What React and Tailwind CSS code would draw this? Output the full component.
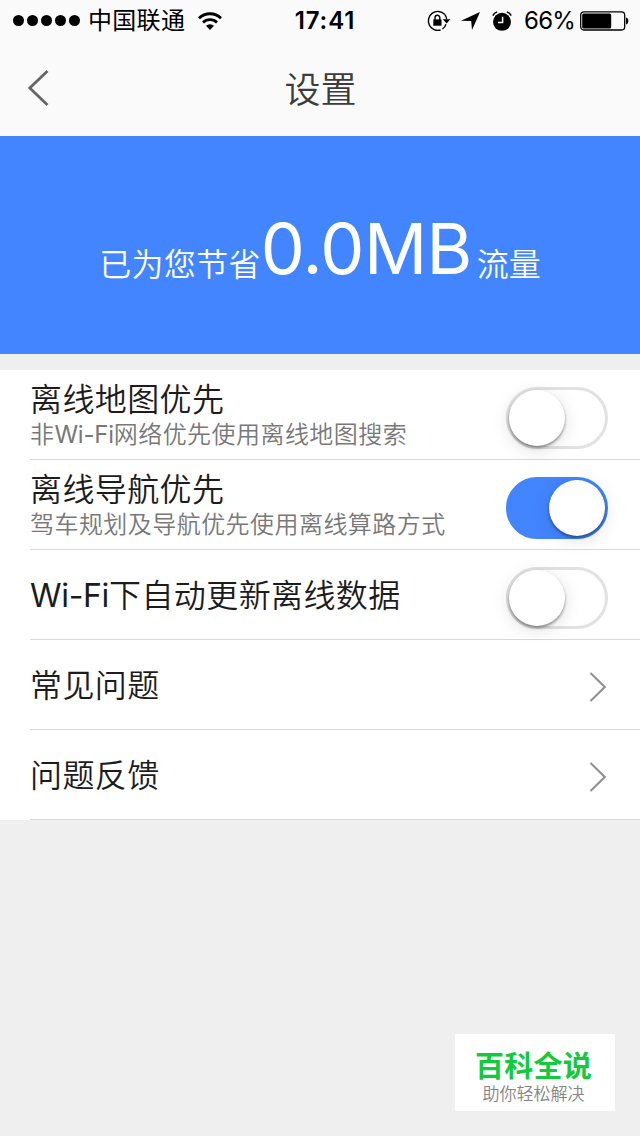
import React, { useState } from 'react';

const settings = [
    { id: 'map', title: '离线地图优先', desc: '非Wi-Fi网络优先使用离线地图搜索', type: 'switch' },
    { id: 'nav', title: '离线导航优先', desc: '驾车规划及导航优先使用离线算路方式', type: 'switch' },
    { id: 'update', title: 'Wi-Fi下自动更新离线数据', type: 'switch' },
    { id: 'faq', title: '常见问题', type: 'link' },
    { id: 'feedback', title: '问题反馈', type: 'link' }
];

// Latin words run a little wide beside Chinese glyphs, so tighten them
const MixedText = ({ text }) =>
    text.split(/([A-Za-z-]+)/).map((part, i) => (
        i % 2 ? <span key={i} className="font-normal tracking-[-0.01em]">{part}</span> : part
    ));

const StatusBar = () => (
    <div className="flex h-[41px] items-center text-black">
        <div className="flex flex-1 items-center pl-[13px]">
            <div className="flex gap-[3px]">
                {[0, 1, 2, 3, 4].map((dot) => (
                    <span key={dot} className="size-[11px] rounded-full bg-black"></span>
                ))}
            </div>
            <span className="ml-2 pt-px text-[24px] leading-6 tracking-[0.3px]">中国联通</span>
            <svg className="ml-[13px] h-[18px] w-6" viewBox="0 0 24 18" fill="none" stroke="#000" strokeWidth="2.8">
                <path d="M1 6.2a15.8 15.8 0 0 1 22 0" />
                <path d="M5 10.4a10 10 0 0 1 14 0" />
                <path d="M12 18l-4-4.2a6 6 0 0 1 8 0z" fill="#000" stroke="none" />
            </svg>
        </div>
        <span className="pl-[8px] text-[24px] leading-6 font-semibold tracking-[0.9px]">17:41</span>
        <div className="flex flex-1 items-center justify-end pr-[11px]">
            {/* Rotation lock */}
            <svg className="h-[22px] w-6" viewBox="0 0 24 22" fill="none" stroke="#000" strokeWidth="1.4">
                <path d="M17.6 4.2A9.5 9.5 0 1 0 13.6 20" />
                <path d="M17.6 4.2A9.5 9.5 0 0 1 19.8 9.5" />
                <path d="M19 14.2a9.5 9.5 0 0 1-3.6 4.8" />
                <path d="M15.8 9.2h7.6l-3.8 4.2z" fill="#000" stroke="none" />
                <path d="M6.3 9.4h8.2v6.3H6.3z" fill="#000" stroke="none" />
                <path d="M8 10V7.6a2.4 2.4 0 0 1 4.8 0V10" />
            </svg>
            <svg className="ml-[10px] h-[18px] w-[19px]" viewBox="0 0 19 18">
                <path d="M19 0L11 18l-.8-9L0 8.7z" />
            </svg>
            {/* Alarm clock */}
            <svg className="ml-[12px] h-5 w-5" viewBox="0 0 20 20">
                <circle cx="10" cy="10.8" r="9" />
                <path d="M.8 4.6A7 7 0 0 1 5.2.9M19.2 4.6A7 7 0 0 0 14.8.9" fill="none" stroke="#000" strokeWidth="1.5" />
                <path d="M10.6 5.8v5.8H6" fill="none" stroke="#fff" strokeWidth="1.5" />
            </svg>
            <span className="ml-[12px] pt-px text-[24px] leading-6 tracking-[-0.8px]">66%</span>
            <svg className="ml-[5px] h-5 w-[49px]" viewBox="0 0 49 20">
                <rect x="0.7" y="0.8" width="44" height="18.2" rx="3.2" fill="none" stroke="#000" strokeWidth="1.3" />
                <rect x="2.2" y="2.4" width="29" height="15" rx="1.5" />
                <path d="M46 6.6c3.2.8 3.2 6 0 6.8z" />
            </svg>
        </div>
    </div>
);

const Switch = ({ on, onToggle }) => (
    <button
        role="switch"
        aria-checked={on}
        onClick={onToggle}
        className={`mt-[6px] mr-8 flex h-[62px] w-[102px] shrink-0 items-center rounded-full border-3 ${on ? 'justify-end border-[#4285ff] bg-[#4285ff]' : 'justify-start border-[#e2e2e2] bg-white'}`}
    >
        <span className="size-[56px] rounded-full bg-white shadow-[0_2px_3px_rgba(0,0,0,0.4),0_4px_18px_rgba(0,0,0,0.13)]"></span>
    </button>
);

const App = () => {
    const [enabled, setEnabled] = useState({ map: false, nav: true, update: false });

    const toggle = (id) => setEnabled({ ...enabled, [id]: !enabled[id] });

    return (
        <div className="relative flex h-[1136px] w-[640px] flex-col overflow-hidden bg-[#efefef] font-['Inter','Noto_Sans_CJK_SC',sans-serif]">
            <header className="h-[136px] shrink-0 bg-[#fafafa]">
                <StatusBar />
                <div className="grid h-[94px] grid-cols-[1fr_auto_1fr] items-center">
                    <svg className="ml-[27px] h-9 w-[22px]" viewBox="0 0 22 36" fill="none" stroke="#666" strokeWidth="2.8">
                        <path d="M20.5 1L2.8 18l17.7 17" />
                    </svg>
                    <h1 className="pt-1 pl-px text-[36px] leading-9 font-[350] text-[#3c3c3c]">设置</h1>
                </div>
            </header>

            <section className="flex h-[218px] shrink-0 items-baseline justify-center bg-[#4285ff] pt-[77px] text-white">
                <span className="relative top-[2px] text-[32px] leading-[72px] font-[350] tracking-[0.3px]">已为您节省</span>
                <span className="text-[70px] leading-[72px] font-[380] tracking-[-0.6px]">0.0MB</span>
                <span className="relative top-[2px] ml-[5px] text-[32px] leading-[72px] font-[350]">流量</span>
            </section>

            <ul className="mt-4 bg-white pl-[30px]">
                {settings.map((item) => (
                    <li key={item.id} className="flex h-[90px] items-center justify-between border-b border-[#d9d9d9]">
                        <div className="flex flex-col gap-[7px] pt-[2px]">
                            <h2 className="text-[32px] leading-8 font-[350] tracking-[0.4px] text-[#1c1c1c]">
                                <MixedText text={item.title} />
                            </h2>
                            {item.desc && (
                                <p className="text-[24px] leading-6 font-[350] tracking-[0.45px] text-[#787878]">
                                    <MixedText text={item.desc} />
                                </p>
                            )}
                        </div>
                        {item.type === 'switch' ? (
                            <Switch on={enabled[item.id]} onToggle={() => toggle(item.id)} />
                        ) : (
                            <svg className="mt-[5px] mr-[33px] h-[30px] w-[18px]" viewBox="0 0 18 30" fill="none" stroke="#929292" strokeWidth="2.2">
                                <path d="M1.5 1L15.8 15 1.5 29" />
                            </svg>
                        )}
                    </li>
                ))}
            </ul>

            {/* Floating brand badge */}
            <div className="absolute top-[1034px] left-[455px] flex h-[77px] w-40 flex-col items-center bg-white pt-[18px]">
                <span className="mr-[3px] text-[29px] leading-[30px] font-bold tracking-[0.3px] text-[#12cb3c]">百科全说</span>
                <span className="mt-[3px] mr-[3px] text-[17px] leading-[18px] font-[350] text-[#858585]">助你轻松解决</span>
            </div>
        </div>
    );
};

export default App;
